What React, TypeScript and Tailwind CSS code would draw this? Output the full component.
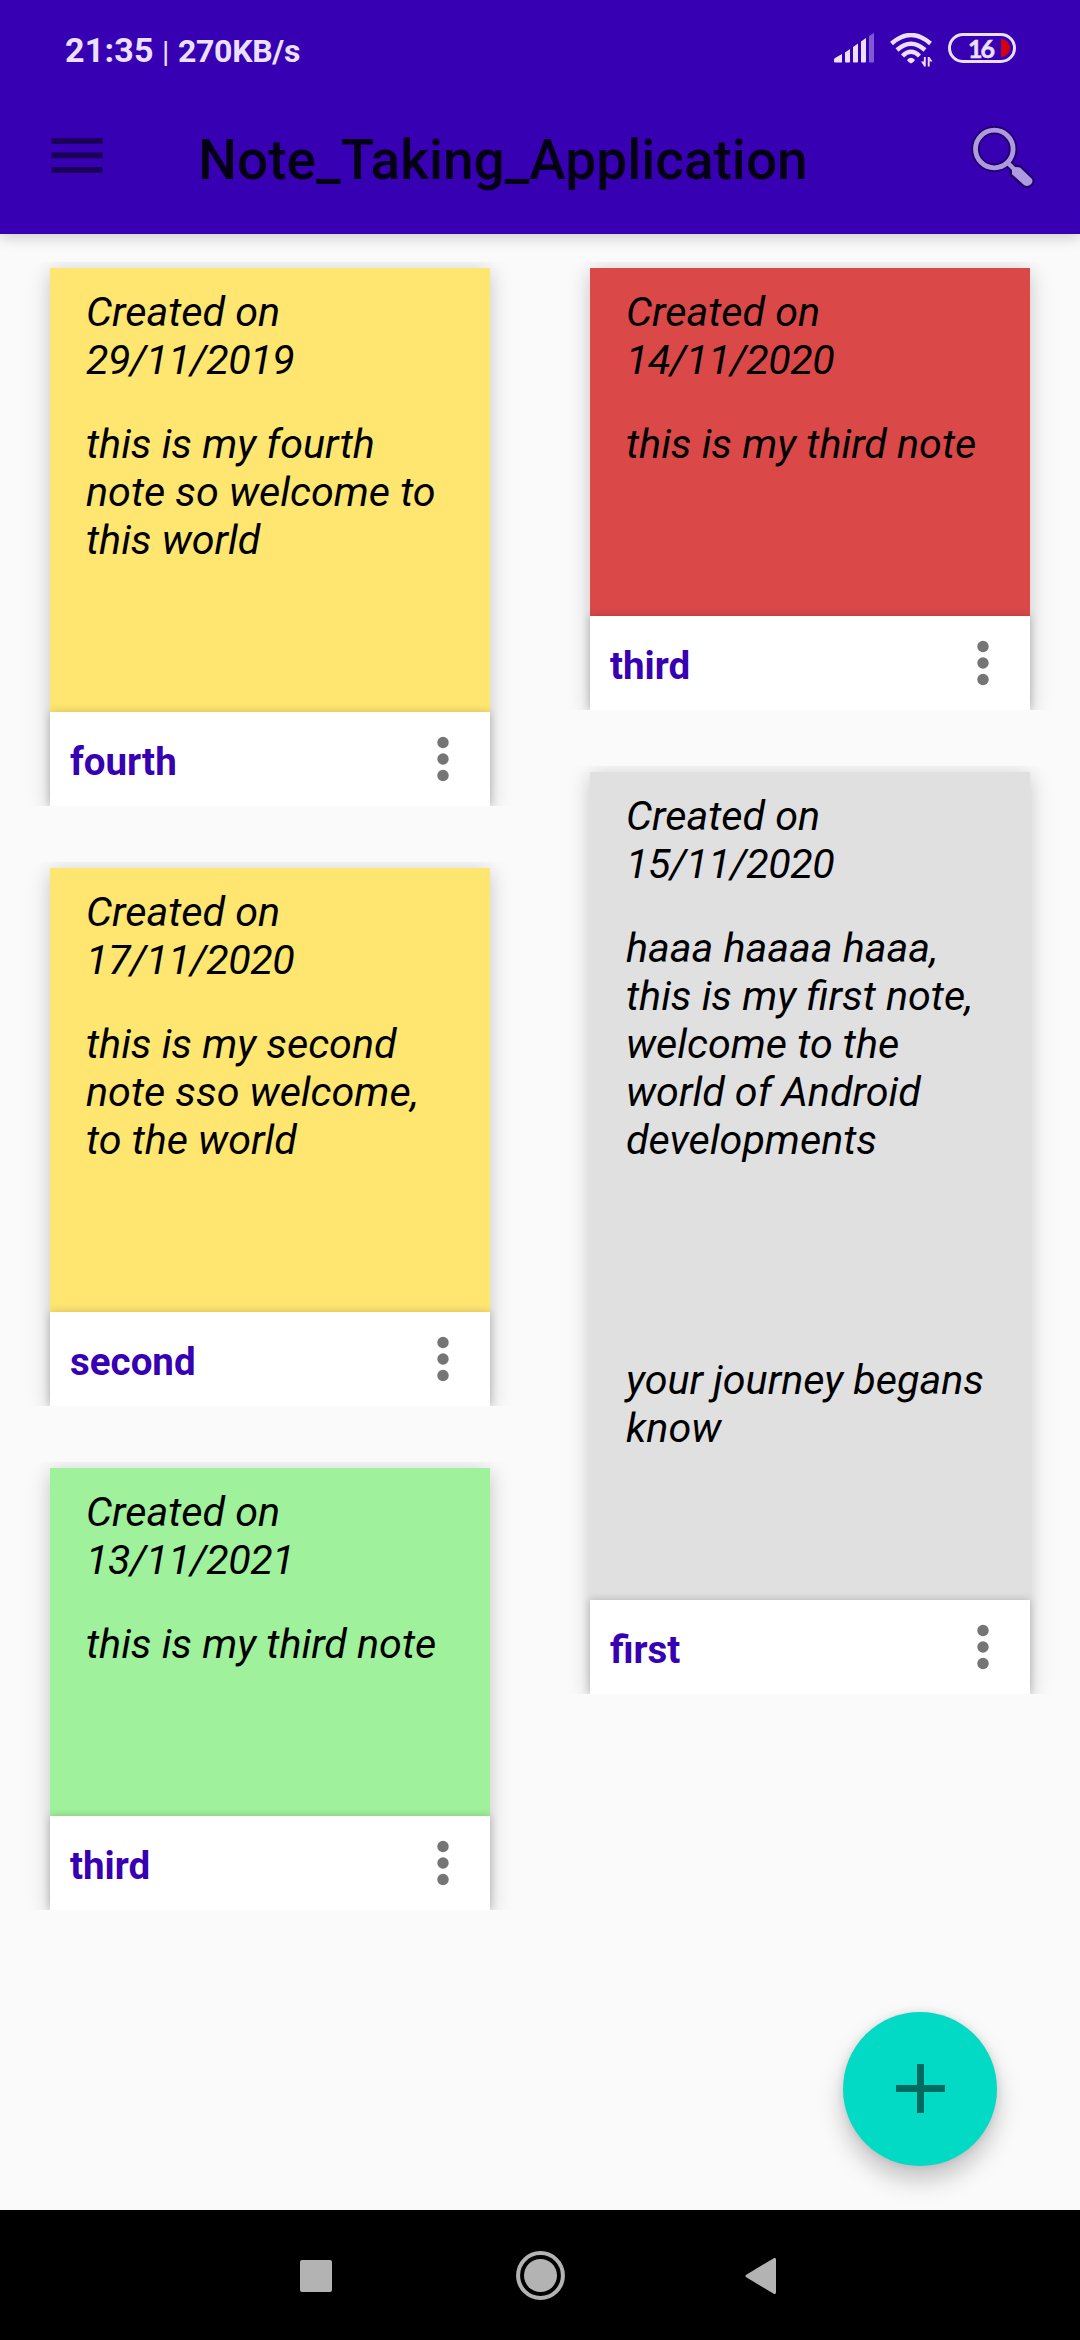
type Note = { title: string; date: string; lines: string[]; color: string };

const leftNotes: Note[] = [
  {
    title: "fourth",
    date: "29/11/2019",
    lines: ["this is my fourth", "note so welcome to", "this world"],
    color: "bg-[#ffe670]",
  },
  {
    title: "second",
    date: "17/11/2020",
    lines: ["this is my second", "note sso welcome,", "to the world"],
    color: "bg-[#ffe670]",
  },
  {
    title: "third",
    date: "13/11/2021",
    lines: ["this is my third note"],
    color: "bg-[#a0f19b]",
  },
];

const rightNotes: Note[] = [
  {
    title: "third",
    date: "14/11/2020",
    lines: ["this is my third note"],
    color: "bg-[#da4848]",
  },
  {
    title: "first",
    date: "15/11/2020",
    lines: [
      "haaa haaaa haaa,",
      "this is my first note,",
      "welcome to the",
      "world of Android",
      "developments",
      "",
      "",
      "",
      "",
      "your journey begans",
      "know",
    ],
    color: "bg-[#e0e0e0]",
  },
];

function NoteCard({ note }: { note: Note }) {
  return (
    <article className="w-[440px] shadow-[0_4px_20px_rgba(0,0,0,0.22)] [clip-path:inset(-6px_-22px_0_-22px)]">
      <div className={`${note.color} overflow-hidden pt-5 pr-4 pb-[148px] pl-9 text-[41.25px] leading-[48px] text-black italic whitespace-nowrap`}>
        <p>Created on</p>
        <p className="tracking-[-0.45px]">{note.date}</p>
        <div className="mt-9">
          {note.lines.map((line, i) => (
            <p key={i} className="h-12">
              {line}
            </p>
          ))}
        </div>
      </div>
      <footer className="flex h-[94px] items-center justify-between bg-white pr-[41px] pl-5 shadow-[0_0_8px_rgba(0,0,0,0.2)]">
        <h2 className="mt-[5px] text-[38.5px] leading-[46px] font-bold text-[#3700b3]">{note.title}</h2>
        <svg className="h-[46px] w-3" viewBox="0 0 12 46" fill="#757575">
          <circle cx="6" cy="6.5" r="5.7" />
          <circle cx="6" cy="23" r="5.7" />
          <circle cx="6" cy="39.5" r="5.7" />
        </svg>
      </footer>
    </article>
  );
}

function SignalIcon() {
  return (
    <svg className="h-[30px] w-10" viewBox="0 0 40 30" fill="#ebe0ff">
      <path d="M0 26.5Q0 25.500 1 25L8 21V29.500H1Q0 29.500 0 28.500Z" />
      <path d="M11 19.500L16 16V28.500Q16 29.500 15 29.500H12Q11 29.500 11 28.500Z" />
      <path d="M19 14L24 10.500V28.500Q24 29.500 23 29.500H20Q19 29.500 19 28.500Z" />
      <path d="M27 8.500L32 5V28.500Q32 29.500 31 29.500H28Q27 29.500 27 28.500Z" />
      <path d="M35 3L40 0V28.500Q40 29.500 39 29.500H36Q35 29.500 35 28.500Z" opacity="0.4" />
    </svg>
  );
}

function WifiIcon() {
  return (
    <svg className="h-[34px] w-11" viewBox="0 0 44 34">
      <g fill="none" stroke="#ebe0ff" strokeWidth="4.4">
        <path d="M1.500 10.500Q21 -6.500 40.500 10.500" />
        <path d="M7 17Q21 4.500 35 17" />
        <path d="M12.500 23Q21 14.500 29.500 23" />
      </g>
      <path d="M17 27Q21 22.500 25 27Q24 29 21 30.500Q18 29 17 27Z" fill="#ebe0ff" />
      <path d="M34.800 24V33.500M38.700 24V33.500" stroke="#ebe0ff" strokeWidth="1.900" />
      <path d="M31 28.500H34V33ZM42.500 28.500H39.500V24Z" fill="#ebe0ff" />
    </svg>
  );
}

function SearchIcon() {
  return (
    <svg className="h-16 w-[68px]" viewBox="0 0 68 64">
      <g fill="none" stroke="#20006b" strokeLinecap="round">
        <circle cx="24.300" cy="25" r="18.800" strokeWidth="8.500" />
        <path d="M38 39L44 45" strokeWidth="8" />
      </g>
      <path d="M41.500 45.500Q42 43 46 42.500L50 43L61.500 54Q64.500 57.500 60.500 61Q57.500 64 53.500 61.500L41.500 50.500Z" fill="#af9ae0" stroke="#20006b" strokeWidth="3.500" />
      <circle cx="24.300" cy="25" r="18.800" fill="none" stroke="#af9ae0" strokeWidth="4.800" />
      <path d="M38 39L45 46" stroke="#af9ae0" strokeWidth="4.500" />
      <path d="M42 45.500Q42.500 43.300 46 43L50 43.500L61.500 54.500Q64 57.500 60.300 60.800Q57.500 63 54 61L42 50.200Z" fill="#af9ae0" />
    </svg>
  );
}

export default function App() {
  return (
    <div className="flex h-[2340px] w-[1080px] flex-col overflow-hidden bg-[#fafafa] font-['Roboto',sans-serif]">
      <header className="z-10 h-[234px] shrink-0 bg-[#3700b3] shadow-[0_3px_14px_rgba(0,0,0,0.2)]">
        <div className="flex h-[100px] items-center justify-between pr-16 pl-[65px] text-[#ebe0ff]">
          <div className="flex items-baseline pt-0.5 whitespace-nowrap">
            <span className="w-[97px] text-[34px] leading-10 font-bold tracking-[0.2px]">21:35</span>
            <span className="w-4 text-[30px] leading-10">|</span>
            <span className="text-[32px] leading-10 font-bold tracking-[-0.3px]">270KB/s</span>
          </div>
          <div className="flex items-start">
            <SignalIcon />
            <span className="ml-4">
              <WifiIcon />
            </span>
            <div className="ml-3.5 flex h-[30px] w-[68px] items-center justify-end rounded-[15px] border-[3px] border-[#ebe0ff] pr-[3px]">
              <span className="mr-2 font-['Lato',sans-serif] text-[25px] leading-6 font-bold tracking-[-2px] [-webkit-text-stroke:0.5px_#ebe0ff]">16</span>
              <span className="h-[18px] w-[9px] rounded-r-full bg-[#d4000f]" />
            </div>
          </div>
        </div>
        <div className="flex h-[134px] items-start pt-[10px] pr-[42px] pl-[51px]">
          <svg className="mt-7 h-9 w-[52px]" viewBox="0 0 52 36" fill="#1b0057">
            <path d="M0.500 0H51.500V5.700H0.500ZM0.500 14.500H51.500V20.200H0.500ZM0.500 29H51.500V34.700H0.500Z" />
          </svg>
          <h1 className="mt-[18px] ml-[95px] flex-1 text-[55px] leading-[64px] font-medium whitespace-nowrap text-[#060014]">Note_Taking_Application</h1>
          <div className="mt-[14px]">
            <SearchIcon />
          </div>
        </div>
      </header>
      <main className="flex min-h-0 flex-1 items-start gap-[100px] px-[50px] pt-[34px]">
        <section className="flex flex-col gap-[62px]">
          {leftNotes.map((n) => (
            <NoteCard key={n.date} note={n} />
          ))}
        </section>
        <section className="flex flex-col gap-[62px]">
          {rightNotes.map((n) => (
            <NoteCard key={n.date} note={n} />
          ))}
        </section>
      </main>
      <button className="absolute top-[2012px] left-[843px] flex size-[154px] items-center justify-center rounded-full bg-[#03dac5] shadow-[0_14px_24px_rgba(0,0,0,0.22),0_0_8px_rgba(0,0,0,0.1)]">
        <svg className="-mt-px size-[49px]" viewBox="0 0 49 49" fill="#016a60">
          <path d="M21 0H28V21H49V28H28V49H21V28H0V21H21Z" />
        </svg>
      </button>
      <nav className="z-10 h-[130px] shrink-0 bg-black">
        <div className="flex h-[131px] items-center pl-[300px]">
          <span className="size-8 rounded-[2px] bg-[#b3b3b3]" />
          <svg className="ml-[184px] size-[49px]" viewBox="0 0 49 49">
            <circle cx="24.500" cy="24.500" r="22.400" fill="none" stroke="#b3b3b3" strokeWidth="4" />
            <circle cx="24.500" cy="24.500" r="16.500" fill="#b3b3b3" />
          </svg>
          <svg className="ml-[180px] h-9 w-[31px]" viewBox="0 0 31 36">
            <path d="M2 18L29.500 1.500V34.500Z" fill="#b3b3b3" stroke="#b3b3b3" strokeWidth="3" strokeLinejoin="round" />
          </svg>
        </div>
      </nav>
    </div>
  );
}
